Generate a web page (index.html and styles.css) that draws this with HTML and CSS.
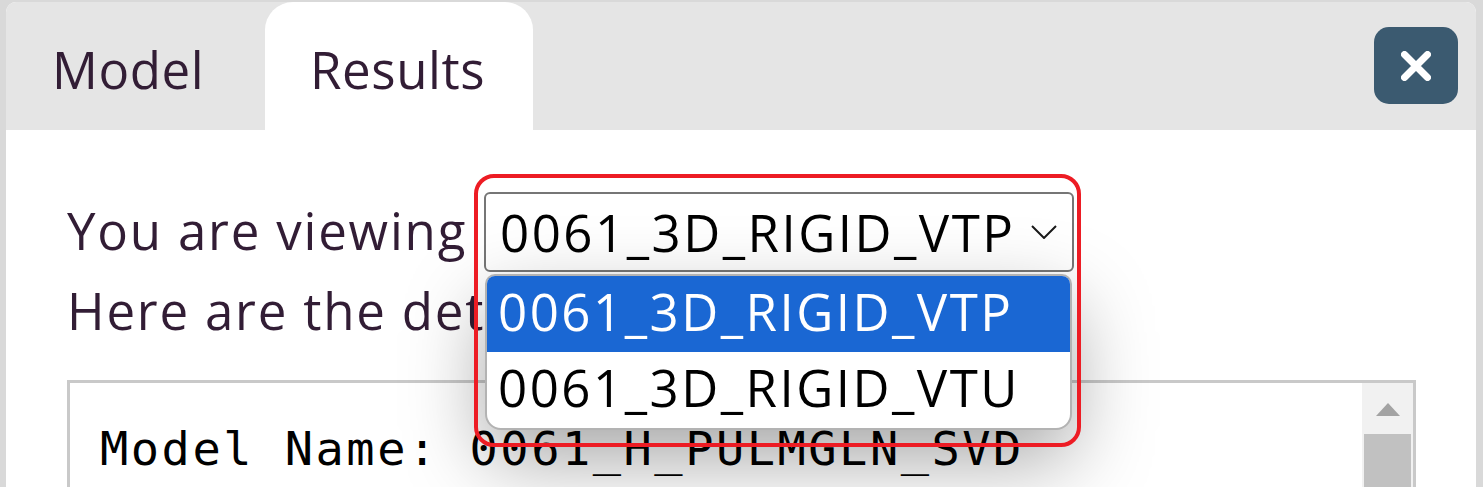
FILE: index.html
```html
<!DOCTYPE html>
<html lang="en">
<head>
<meta charset="utf-8">
<title>Results</title>
<link rel="stylesheet" href="styles.css">
</head>
<body>
<div class="panel">
  <div class="tabbar">
    <div class="tab">Model</div>
    <div class="tab active">Results</div>
    <button class="close" aria-label="Close">
      <svg width="30" height="30" viewBox="0 0 30 30"><path d="M3.5 3.5L26.5 26.5M26.5 3.5L3.5 26.5" stroke="#fff" stroke-width="7" stroke-linecap="round" fill="none"/></svg>
    </button>
  </div>
  <div class="content">
    <div class="row">
      <span class="label">You are viewing</span>
      <div class="select">
        <span class="select-value">0061_3D_RIGID_VTP</span>
        <svg class="chevron" width="26" height="14" viewBox="0 0 26 14"><path d="M1 1L13 13L25 1" stroke="#1a1a1a" stroke-width="2" fill="none"/></svg>
      </div>
    </div>
    <div class="row2">Here are the details:</div>
    <div class="pre">
      <div class="code">Model Name: 0061_H_PULMGLN_SVD</div>
      <div class="scrollbar">
        <div class="arrow"></div>
        <div class="thumb"></div>
      </div>
    </div>
  </div>
  <div class="dropdown">
    <div class="opt sel">0061_3D_RIGID_VTP</div>
    <div class="opt">0061_3D_RIGID_VTU</div>
  </div>
  <div class="highlight"></div>
</div>
</body>
</html>
```
FILE: styles.css
```css
html, body {
  margin: 0;
  padding: 0;
  background: #d9d9d9;
  height: 487px;
  overflow: hidden;
}
.panel {
  position: relative;
  margin: 2px 0 0 6px;
  width: 1470px;
  height: 485px;
  background: #fff;
  border-radius: 10px 10px 0 0;
  overflow: hidden;
  font-family: "Open Sans", sans-serif;
  color: #321d35;
}
.tabbar {
  display: flex;
  height: 128px;
  background: #e5e5e5;
}
.tab {
  box-sizing: border-box;
  width: 259px;
  padding: 32px 0 0 46px;
  font-size: 51px;
  letter-spacing: 0.6px;
  white-space: nowrap;
}
.tab.active {
  width: 268px;
  padding-left: 45px;
  background: #fff;
  border-radius: 28px 28px 0 0;
}
.close {
  margin: 25px 18px 0 auto;
  width: 84px;
  height: 77px;
  border: none;
  border-radius: 15px;
  background: #3b5a70;
  display: flex;
  align-items: center;
  justify-content: center;
  padding: 0;
}
.content {
  padding-left: 61px;
}
.row {
  display: flex;
  margin-top: 62px;
  height: 80px;
}
.label {
  width: 417px;
  flex-shrink: 0;
  font-size: 51px;
  line-height: 76px;
  letter-spacing: 1.8px;
  white-space: nowrap;
}
.select {
  box-sizing: border-box;
  width: 590px;
  height: 80px;
  border: 2px solid #767676;
  border-radius: 6px;
  display: flex;
  align-items: center;
  justify-content: space-between;
  padding: 0 15px 0 14px;
  color: #000;
  font-size: 51px;
  letter-spacing: 2.5px;
  white-space: nowrap;
}
.row2 {
  width: 418px;
  overflow: hidden;
  font-size: 51px;
  line-height: 76px;
  letter-spacing: 1.8px;
  white-space: nowrap;
}
.pre {
  margin-top: 32px;
  width: 1349px;
  height: 200px;
  box-sizing: border-box;
  border: 3px solid #c9c9c9;
  display: flex;
}
.code {
  flex: 1;
  padding: 38px 0 0 30px;
  font-family: "DejaVu Sans Mono", monospace;
  font-size: 47px;
  letter-spacing: 2.5px;
  color: #000;
  white-space: pre;
}
.scrollbar {
  width: 51px;
  background: #f1f1f1;
  display: flex;
  flex-direction: column;
  align-items: center;
}
.arrow {
  margin-top: 20px;
  width: 0;
  height: 0;
  border-left: 12.5px solid transparent;
  border-right: 12.5px solid transparent;
  border-bottom: 13px solid #a3a3a3;
}
.thumb {
  margin-top: 18px;
  width: 47px;
  flex: 1;
  background: #c1c1c1;
}
.dropdown {
  position: absolute;
  left: 479px;
  top: 272px;
  width: 587px;
  box-sizing: border-box;
  border: 2px solid #b3b3b3;
  border-radius: 10px 10px 16px 16px;
  background: #fff;
  overflow: hidden;
  box-shadow: 0 30px 80px rgba(0, 0, 0, 0.35);
  font-size: 51px;
  letter-spacing: 2.5px;
  color: #000;
}
.opt {
  box-sizing: border-box;
  height: 76px;
  padding-left: 11px;
  line-height: 70px;
  white-space: nowrap;
}
.opt.sel {
  background: #1a67d3;
  color: #fff;
}
.highlight {
  position: absolute;
  left: 468px;
  top: 172px;
  width: 607px;
  height: 273px;
  box-sizing: border-box;
  border: 4px solid #ed1c24;
  border-radius: 20px;
  pointer-events: none;
}
```
